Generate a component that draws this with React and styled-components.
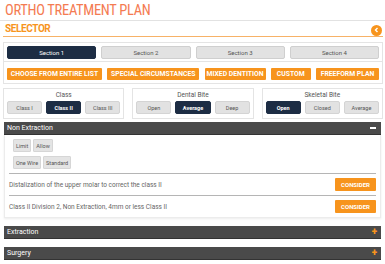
import React from "react"
import styled, { createGlobalStyle } from "styled-components"

const Global = createGlobalStyle`
body {
  margin: 0;
  background: #fff;
  font-family: Roboto, "Liberation Sans", sans-serif;
}
* { box-sizing: border-box; }
`

const Page = styled.div`
width: 385px;
padding: 0 2px 0 3px;
`
const Title = styled.h1`
margin: 0 -2px 0 -3px;
padding: 3px 0 0 5px;
height: 21px;
font-family: "Liberation Sans Narrow", "Roboto Condensed", Roboto, sans-serif;
font-size: 14.5px;
font-weight: 400;
letter-spacing: -0.3px;
color: #f47b52;
line-height: 15px;
border-bottom: 1px solid #e2e2e2;
`
const SelectorBar = styled.div`
display: flex;
align-items: center;
justify-content: space-between;
height: 16px;
border-bottom: 1px solid #f7b267;
padding: 0 0 0 2px;
`
const SelectorTitle = styled.h2`
margin: 0;
font-size: 10px;
font-weight: 700;
color: #f7941d;
letter-spacing: -0.4px;
`
const Circle = styled.span`
width: 11px;
height: 11px;
border-radius: 50%;
background: #f7941d;
color: #fff;
display: flex;
align-items: center;
justify-content: center;
margin-right: 1px;
margin-top: 3px;
`
const Box = styled.div`
border: 1px solid #e4e4e4;
padding: 3px;
`
const Tabs = styled(Box)`
margin-top: 5px;
padding: 3px 3px 2px;
display: grid;
grid-template-columns: repeat(4, 1fr);
gap: 5px;
`
const Tab = styled.div`
height: 13px;
border-radius: 2px;
font-size: 6px;
display: flex;
align-items: center;
justify-content: center;
background: ${p => (p.$active ? "#1d2d44" : "#e2e2e2")};
color: ${p => (p.$active ? "#fff" : "#555")};
border: 1px solid ${p => (p.$active ? "#1d2d44" : "#cfcfcf")};
`
const Options = styled(Box)`
border-top: 0;
padding: 6px 3px 3px;
display: flex;
justify-content: space-between;
`
const OrangeBtn = styled.div`
width: ${p => p.$w}px;
height: 12px;
background: #f7941d;
color: #fff;
font-size: 6.8px;
font-weight: 700;
display: flex;
align-items: center;
justify-content: center;
white-space: nowrap;
border-radius: 1px;
`
const Groups = styled.div`
display: flex;
gap: 8px;
margin-top: 4px;
`
const Group = styled(Box)`
flex: 1;
height: 31px;
padding: 0 3px;
display: flex;
flex-direction: column;
align-items: center;
`
const GroupLabel = styled.div`
font-size: 6.5px;
color: #555;
height: 12px;
display: flex;
align-items: center;
`
const GroupBtns = styled.div`
display: flex;
gap: 4px;
width: 100%;
`
const SmallBtn = styled.div`
flex: 1;
height: 13px;
font-size: 5.5px;
font-weight: ${p => (p.$active ? 700 : 400)};
display: flex;
align-items: center;
justify-content: center;
border-radius: 2px;
background: ${p => (p.$active ? "#1d2d44" : "#e2e2e2")};
color: ${p => (p.$active ? "#fff" : "#555")};
border: 1px solid ${p => (p.$active ? "#1d2d44" : "#d4d4d4")};
`
const PanelHead = styled.div`
margin: ${p => p.$gap}px 2px 0 1px;
height: 13px;
background: #4a4a4a;
color: #fff;
font-size: 7px;
display: flex;
align-items: center;
justify-content: space-between;
padding: 0 3px 0 3px;
border-bottom: 1px solid #333;
`
const Minus = styled.span`
width: 6px;
height: 2px;
background: #fff;
margin-right: 2px;
`
const Plus = styled.span`
color: #f7941d;
font-weight: 900;
font-size: 10px;
line-height: 10px;
margin-right: 1px;
`
const PanelBody = styled.div`
margin: 0 2px 0 1px;
border: 1px solid #ececec;
border-top: 0;
padding: 4px 4px 0 4px;
box-shadow: 0 1px 2px rgba(0,0,0,0.08);
`
const ChipRow = styled.div`
display: flex;
gap: 2px;
margin: 0 0 4px 4px;
`
const Chip = styled.div`
height: 13px;
padding: 0 2px;
font-size: 5.5px;
color: #555;
background: #e4e4e4;
border: 1px solid #d6d6d6;
border-radius: 1px;
display: flex;
align-items: center;
`
const Row = styled.div`
border-top: 1px solid #b5b5b5;
display: flex;
align-items: center;
justify-content: space-between;
height: 22px;
font-size: 6.5px;
color: #666;
`
const Consider = styled.div`
height: 13px;
width: 41px;
background: #f7941d;
color: #fff;
font-size: 6px;
font-weight: 700;
display: flex;
align-items: center;
justify-content: center;
border-radius: 1px;
`

export default function App() {
  return (
    <>
      <Global />
      <Page>
        <Title>ORTHO TREATMENT PLAN</Title>
        <SelectorBar>
          <SelectorTitle>SELECTOR</SelectorTitle>
          <Circle>
            <svg width="5" height="6" viewBox="0 0 5 6">
              <path d="M3.5 1 L1.5 3 L3.5 5" stroke="#fff" strokeWidth="1.4" fill="none" />
            </svg>
          </Circle>
        </SelectorBar>
        <Tabs>
          <Tab $active>Section 1</Tab>
          <Tab>Section 2</Tab>
          <Tab>Section 3</Tab>
          <Tab>Section 4</Tab>
        </Tabs>
        <Options>
          <OrangeBtn $w={95}>CHOOSE FROM ENTIRE LIST</OrangeBtn>
          <OrangeBtn $w={92}>SPECIAL CIRCUMSTANCES</OrangeBtn>
          <OrangeBtn $w={61}>MIXED DENTITION</OrangeBtn>
          <OrangeBtn $w={40}>CUSTOM</OrangeBtn>
          <OrangeBtn $w={63}>FREEFORM PLAN</OrangeBtn>
        </Options>
        <Groups>
          <Group>
            <GroupLabel>Class</GroupLabel>
            <GroupBtns>
              <SmallBtn>Class I</SmallBtn>
              <SmallBtn $active>Class II</SmallBtn>
              <SmallBtn>Class III</SmallBtn>
            </GroupBtns>
          </Group>
          <Group>
            <GroupLabel>Dental Bite</GroupLabel>
            <GroupBtns>
              <SmallBtn>Open</SmallBtn>
              <SmallBtn $active>Average</SmallBtn>
              <SmallBtn>Deep</SmallBtn>
            </GroupBtns>
          </Group>
          <Group>
            <GroupLabel>Skeletal Bite</GroupLabel>
            <GroupBtns>
              <SmallBtn $active>Open</SmallBtn>
              <SmallBtn>Closed</SmallBtn>
              <SmallBtn>Average</SmallBtn>
            </GroupBtns>
          </Group>
        </Groups>
        <PanelHead $gap={3}>
          <span>Non Extraction</span>
          <Minus />
        </PanelHead>
        <PanelBody>
          <ChipRow>
            <Chip>Limit</Chip>
            <Chip>Allow</Chip>
          </ChipRow>
          <ChipRow>
            <Chip>One Wire</Chip>
            <Chip>Standard</Chip>
          </ChipRow>
          <Row>
            <span>Distalization of the upper molar to correct the class II</span>
            <Consider>CONSIDER</Consider>
          </Row>
          <Row>
            <span>Class II Division 2, Non Extraction, 4mm or less Class II</span>
            <Consider>CONSIDER</Consider>
          </Row>
        </PanelBody>
        <PanelHead $gap={8}>
          <span>Extraction</span>
          <Plus>+</Plus>
        </PanelHead>
        <PanelHead $gap={8}>
          <span>Surgery</span>
          <Plus>+</Plus>
        </PanelHead>
      </Page>
    </>
  )
}
